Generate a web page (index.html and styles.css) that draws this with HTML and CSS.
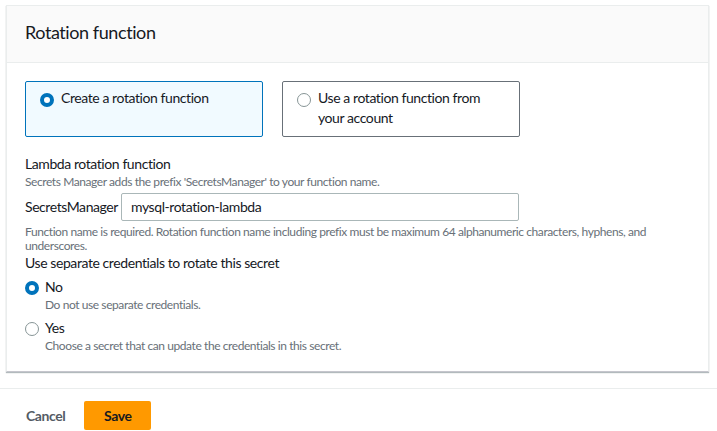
FILE: index.html
```html
<!DOCTYPE html>
<html>
<head>
<meta charset="utf-8">
<link rel="stylesheet" href="styles.css">
</head>
<body>
<div class="page">
  <section class="card">
    <header class="card-head"><h2 class="title">Rotation function</h2></header>
    <div class="card-body">
      <div class="tiles">
        <div class="tile tile-on">
          <span class="radio radio-on"></span>
          <span class="tile-text">Create a rotation function</span>
        </div>
        <div class="tile">
          <span class="radio"></span>
          <span class="tile-text">Use a rotation function from your account</span>
        </div>
      </div>
      <div class="field">
        <div class="label">Lambda rotation function</div>
        <div class="desc">Secrets Manager adds the prefix 'SecretsManager' to your function name.</div>
        <div class="prefix-row">
          <span class="prefix">SecretsManager</span>
          <div class="input">mysql-rotation-lambda</div>
        </div>
        <div class="desc hint">Function name is required. Rotation function name including prefix must be maximum 64 alphanumeric characters, hyphens, and underscores.</div>
      </div>
      <div class="field2">
        <div class="label">Use separate credentials to rotate this secret</div>
        <div class="opt">
          <span class="radio radio-on"></span>
          <div class="opt-text">
            <div class="opt-label">No</div>
            <div class="desc">Do not use separate credentials.</div>
          </div>
        </div>
        <div class="opt">
          <span class="radio"></span>
          <div class="opt-text">
            <div class="opt-label">Yes</div>
            <div class="desc">Choose a secret that can update the credentials in this secret.</div>
          </div>
        </div>
      </div>
    </div>
  </section>
  <div class="footer">
    <span class="cancel">Cancel</span>
    <span class="save">Save</span>
  </div>
</div>
</body>
</html>
```
FILE: styles.css
```css
* { box-sizing: border-box; }
html, body { margin: 0; padding: 0; background: #fff; }
body {
  font-family: Lato, "Liberation Sans", Arial, sans-serif;
  color: #16191f;
  font-size: 14px;
  line-height: 20px;
  letter-spacing: -0.03em;
}
.page { padding-top: 5px; }
.card {
  margin: 0 8px 0 6px;
  border: 1px solid #eaeded;
  border-bottom-color: #c6c6cd;
  box-shadow: 0 1px 1px rgba(0,28,36,0.3);
  background: #fff;
}
.card-head {
  background: #fafafa;
  border-bottom: 1px solid #eaeded;
  height: 57px;
  padding: 0 18px 4px 18px;
  display: flex;
  align-items: center;
}
.title {
  margin: 0;
  font-size: 18px;
  font-weight: 400;
  line-height: 22px;
}
.card-body { padding: 18px 18px 17px 18px; }
.tiles { display: flex; gap: 19px; }
.tile {
  width: 238px;
  height: 56px;
  border: 1px solid #687078;
  border-radius: 2px;
  padding: 6px 14px 8px 14px;
  display: flex;
  align-items: flex-start;
  gap: 7px;
}
.tile-on { border-color: #0073bb; background: #f1faff; }
.tile-text { display: block; width: 200px; }
.radio {
  flex: none;
  width: 14px;
  height: 14px;
  margin-top: 4px;
  border-radius: 50%;
  border: 1px solid #879596;
  background: #fff;
}
.tile .radio { margin-top: 5px; }
.radio-on { border: 4px solid #0073bb; }
.field { margin-top: 17px; }
.label { font-size: 14px; line-height: 20px; }
.desc { font-size: 12px; line-height: 16px; color: #687078; }
.prefix-row { display: flex; align-items: center; margin-top: 3px; height: 28px; }
.prefix { width: 96px; flex: none; }
.input {
  width: 398px;
  height: 28px;
  border: 1px solid #aab7b8;
  border-radius: 2px;
  padding: 3px 9px;
}
.hint { margin-top: 4px; width: 680px; line-height: 14px; }
.field2 { margin-top: 0; }
.opt { display: flex; gap: 6px; margin-top: 4px; }
.opt + .opt { margin-top: 5px; }
.opt-label { line-height: 20px; }
.footer {
  margin-top: 16px;
  border-top: 1px solid #eaeded;
  padding: 12px 0 0 26px;
  display: flex;
  align-items: center;
  gap: 19px;
}
.cancel { font-weight: 700; color: #545b64; font-size: 14px; }
.save {
  background: #ff9900;
  font-weight: 700;
  border-radius: 2px;
  height: 29px;
  width: 67px;
  display: flex;
  align-items: center;
  justify-content: center;
}
```
